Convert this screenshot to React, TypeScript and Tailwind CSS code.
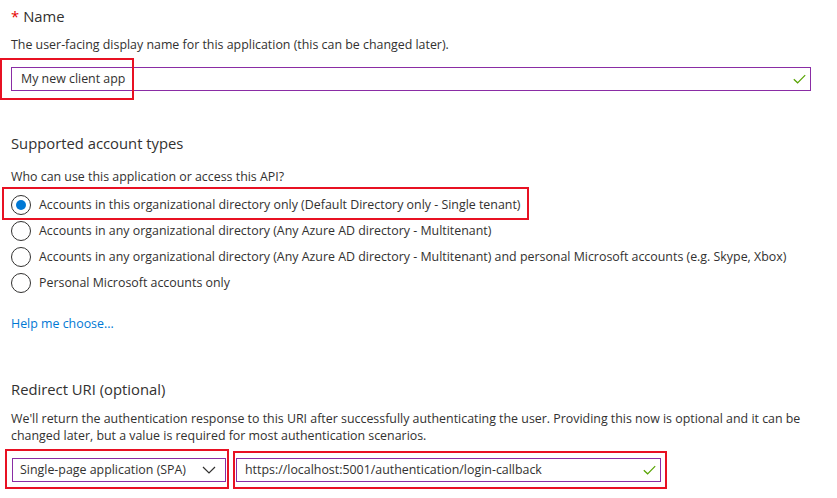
import React from "react";

const Check = () => (
  <svg width="13" height="10" viewBox="0 0 13 10" fill="none">
    <path d="M0.8 5.2 L4.6 8.8 L12.2 1.2" stroke="#57a300" strokeWidth="1.2" />
  </svg>
);

const Chevron = () => (
  <svg width="14" height="8" viewBox="0 0 14 8" fill="none">
    <path d="M1 1 L7 7 L13 1" stroke="#323130" strokeWidth="1.2" />
  </svg>
);

const Radio = ({ checked, label, boxed }: { checked?: boolean; label: string; boxed?: boolean }) => (
  <div className="relative flex h-[26px] items-center gap-[8px]">
    <span className="flex h-[20px] w-[20px] shrink-0 items-center justify-center rounded-full border border-[#323130] bg-white">
      {checked && <span className="h-[10px] w-[10px] rounded-full bg-[#0078d4]" />}
    </span>
    <span className="whitespace-nowrap text-[12.4px] leading-[18px] text-[#323130]">{label}</span>
    {boxed && <div className="pointer-events-none absolute left-[-9px] top-[-5px] h-[33px] w-[527px] border-2 border-[#e81123]" />}
  </div>
);

export default function App() {
  return (
    <div className="h-[498px] w-[837px] overflow-hidden bg-white pl-[11px] pt-[5px] font-['Open_Sans',sans-serif] text-[#323130]">
      <div className="flex items-center text-[14.8px] leading-[22px]">
        <span className="mr-[4px] text-[#e50000]">*</span>
        <span>Name</span>
      </div>
      <p className="mt-[9px] whitespace-nowrap text-[12.4px] leading-[18px]">
        The user-facing display name for this application (this can be changed later).
      </p>
      <div className="relative mt-[13px] flex h-[24px] w-[800px] items-center justify-between border border-[#8a2da5] pl-[9px] pr-[4px]">
        <span className="text-[12.4px] leading-[18px]">My new client app</span>
        <Check />
        <div className="pointer-events-none absolute left-[-12px] top-[-10px] h-[42px] w-[134px] border-2 border-[#e81123]" />
      </div>

      <h2 className="mt-[41px] text-[14.8px] font-normal leading-[22px]">Supported account types</h2>
      <p className="mt-[14px] text-[12.4px] leading-[18px]">Who can use this application or access this API?</p>
      <div className="mt-[6px] flex flex-col">
        <Radio checked boxed label="Accounts in this organizational directory only (Default Directory only - Single tenant)" />
        <Radio label="Accounts in any organizational directory (Any Azure AD directory - Multitenant)" />
        <Radio label="Accounts in any organizational directory (Any Azure AD directory - Multitenant) and personal Microsoft accounts (e.g. Skype, Xbox)" />
        <Radio label="Personal Microsoft accounts only" />
      </div>
      <p className="mt-[19px] text-[12.4px] leading-[18px] text-[#0078d4]">Help me choose...</p>

      <h2 className="mt-[45px] text-[14.8px] font-normal leading-[22px]">Redirect URI (optional)</h2>
      <p className="mt-[10px] whitespace-nowrap text-[12.4px] leading-[17px]">
        We'll return the authentication response to this URI after successfully authenticating the user. Providing this now is optional and it can be
        <br />
        changed later, but a value is required for most authentication scenarios.
      </p>
      <div className="mt-[14px] flex items-center gap-[10px]">
        <div className="relative ml-[1px] flex h-[24px] w-[214px] items-center justify-between border border-[#8a2da5] pl-[7px] pr-[9px]">
          <span className="text-[12.4px] leading-[18px]">Single-page application (SPA)</span>
          <Chevron />
          <div className="pointer-events-none absolute left-[-8px] top-[-10px] h-[40px] w-[224px] border-2 border-[#e81123]" />
        </div>
        <div className="relative flex h-[24px] w-[425px] items-center justify-between border border-[#8a2da5] pl-[8px] pr-[4px]">
          <span className="text-[12.4px] leading-[18px]">https://localhost:5001/authentication/login-callback</span>
          <Check />
          <div className="pointer-events-none absolute left-[-4px] top-[-8px] h-[38px] w-[434px] border-2 border-[#e81123]" />
        </div>
      </div>
    </div>
  );
}
